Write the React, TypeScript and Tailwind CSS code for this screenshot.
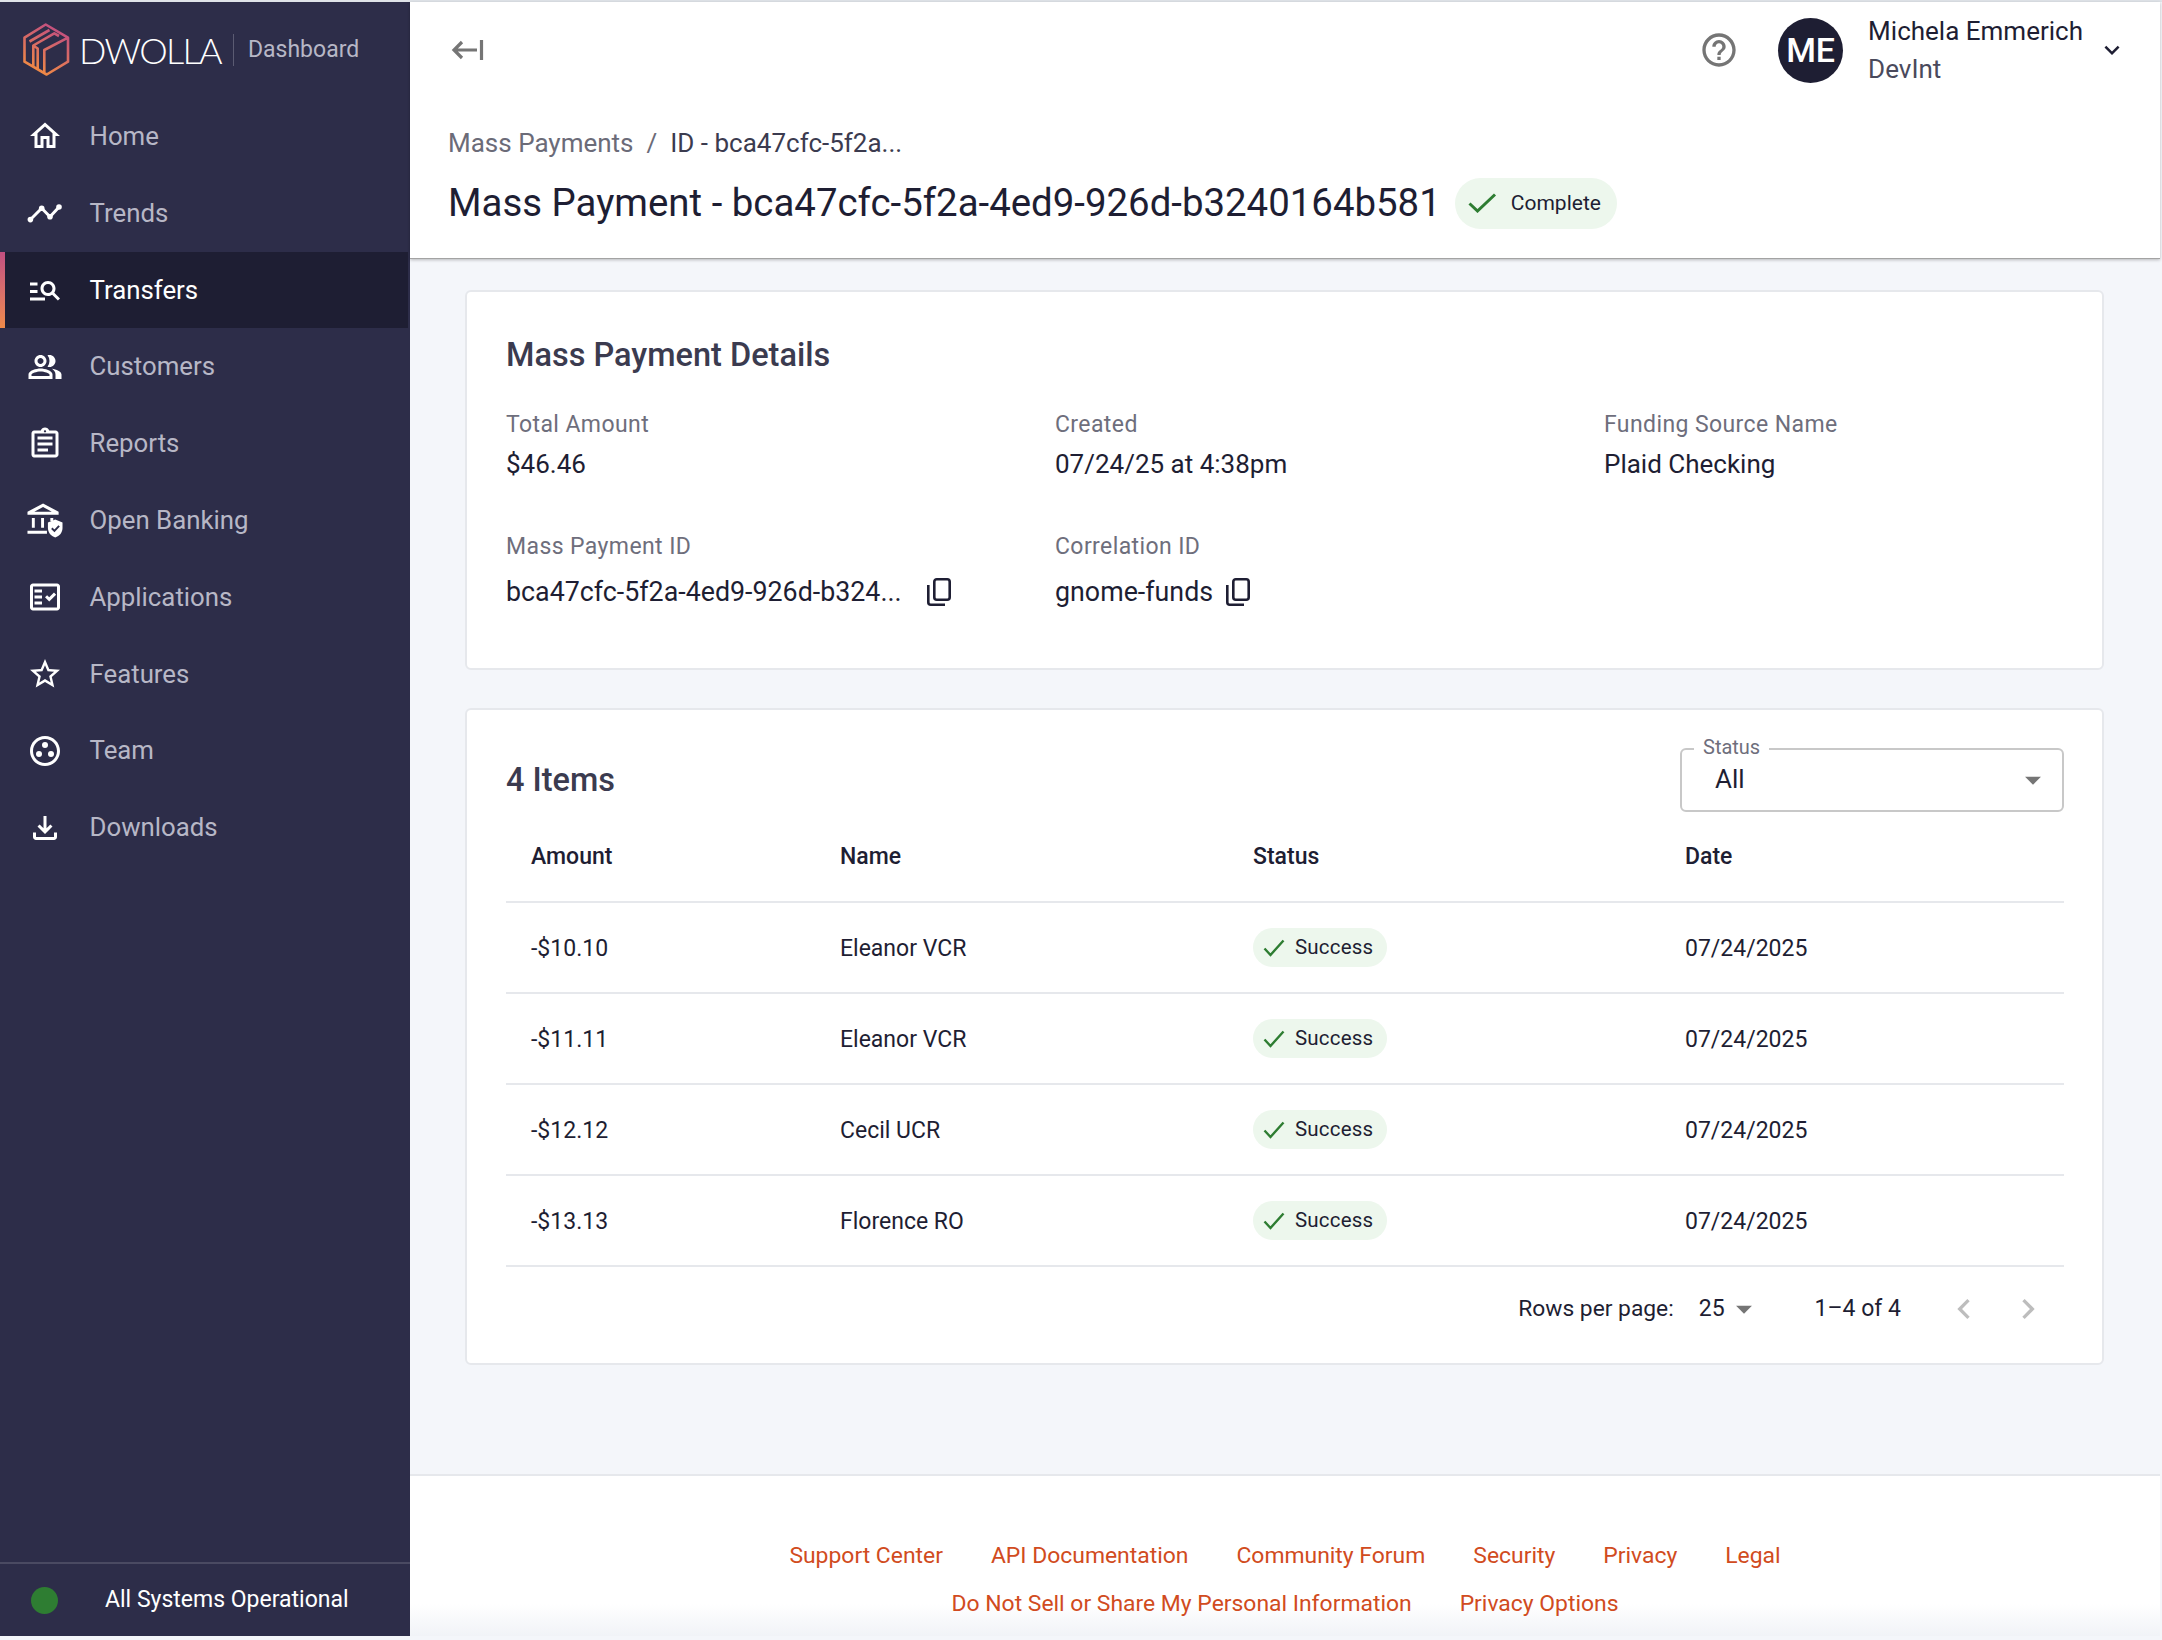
import {
  MdOutlineHome,
  MdManageSearch,
  MdOutlinePeopleAlt,
  MdOutlineAssignment,
  MdOutlineFactCheck,
  MdOutlineStarBorder,
  MdOutlineGroupWork,
  MdOutlineFileDownload,
  MdHelpOutline,
  MdKeyboardArrowDown,
  MdArrowDropDown,
  MdChevronLeft,
  MdChevronRight,
} from "react-icons/md";

const navIcon = { size: 38 };

function Logo() {
  return (
    <svg width="47" height="54" viewBox="8 8 47 54" fill="none" strokeWidth="2.6" strokeLinejoin="round">
      <defs>
        <linearGradient id="dw" gradientUnits="userSpaceOnUse" x1="42" y1="12" x2="20" y2="56">
          <stop offset="0" stopColor="#c24f80" />
          <stop offset="1" stopColor="#f08a45" />
        </linearGradient>
      </defs>
      <path
        d="M30.7 9.5 53 22.7V46.7L31.7 59.5 9.5 46.7V22.7ZM18.3 51.5V30.5L39.3 18.3 44 21M22.7 54V33.5L18.3 30.5M29.3 58V35L53 22.7M14.5 26.5 34.5 15"
        stroke="url(#dw)"
      />
    </svg>
  );
}

function TrendsIcon() {
  return (
    <svg width="36" height="36" viewBox="0 0 36 36" fill="none">
      <path d="M3 25 14.7 13.3 23 21.7 32.3 11.7" stroke="#fff" strokeWidth="3" strokeLinecap="round" strokeLinejoin="round" />
      <circle cx="3.4" cy="24.6" r="2.8" fill="#fff" />
      <circle cx="14.7" cy="13.3" r="2.8" fill="#fff" />
      <circle cx="23" cy="21.7" r="2.8" fill="#fff" />
      <circle cx="32" cy="12" r="2.8" fill="#fff" />
    </svg>
  );
}

function BankIcon() {
  return (
    <svg width="37" height="37" viewBox="0 0 37 37" fill="none">
      <path d="M16.5 1 32.5 9.5V12.5H.5V9.5Z M16.5 4.6 7.5 9.6H25.5Z" fill="#fff" fillRule="evenodd" />
      <path d="M5 16h3v10H5zM14.5 16h3v10h-3zM24 16h3v3h-3zM.5 29h20v3H.5z" fill="#fff" />
      <path d="M29 17.5 36.5 20.5V26C36.5 31 33.5 34.5 29 36 24.5 34.5 21.5 31 21.5 26V20.5Z" fill="#fff" />
      <path d="M25.5 26.5 28.2 29.2 33 24" stroke="#2d2d49" strokeWidth="2" />
    </svg>
  );
}

function CopyIcon({ className }: { className: string }) {
  return (
    <svg className={className} width="24" height="28" viewBox="0 0 24 28" fill="none" stroke="#1e1e33" strokeWidth="2.6">
      <rect x="7.3" y="1.3" width="15.4" height="20.4" rx="2.5" />
      <path d="M1.3 7v17.2a2.5 2.5 0 0 0 2.5 2.5H18" />
    </svg>
  );
}

function NavItem({ icon, label, active }: { icon: React.ReactNode; label: string; active?: boolean }) {
  return (
    <div
      className={
        active
          ? "relative flex h-[76.8px] w-[408px] items-center gap-[26.5px] bg-[#1e1e33] pl-[27px] text-white"
          : "relative flex h-[76.8px] items-center gap-[26.5px] pl-[27px] text-[#b7b7c6]"
      }
    >
      {active && <span className="absolute top-0 left-0 h-full w-[5px] bg-linear-to-b from-[#c24f80] to-[#ef8a48]" />}
      <span className="flex w-[36px] items-center justify-center text-white">{icon}</span>
      <span className="text-[25.8px]">{label}</span>
    </div>
  );
}

function Sidebar() {
  return (
    <aside className="flex w-[410px] shrink-0 flex-col bg-[#2d2d49]">
      <div className="flex h-[96px] items-center pl-[23px]">
        <Logo />
        <span className="ml-[9px] font-['Lato',sans-serif] text-[36px] font-light tracking-[-1.7px] text-white">DWOLLA</span>
        <span className="ml-[12px] h-[32px] w-[1px] bg-[#5b5b72]" />
        <span className="ml-[14px] text-[23px] text-[#b7b7c6]">Dashboard</span>
      </div>
      <nav className="flex flex-col">
        <NavItem icon={<MdOutlineHome {...navIcon} />} label="Home" />
        <NavItem icon={<TrendsIcon />} label="Trends" />
        <NavItem icon={<MdManageSearch {...navIcon} />} label="Transfers" active />
        <NavItem icon={<MdOutlinePeopleAlt {...navIcon} />} label="Customers" />
        <NavItem icon={<MdOutlineAssignment {...navIcon} />} label="Reports" />
        <NavItem icon={<BankIcon />} label="Open Banking" />
        <NavItem icon={<MdOutlineFactCheck {...navIcon} />} label="Applications" />
        <NavItem icon={<MdOutlineStarBorder {...navIcon} />} label="Features" />
        <NavItem icon={<MdOutlineGroupWork {...navIcon} />} label="Team" />
        <NavItem icon={<MdOutlineFileDownload {...navIcon} />} label="Downloads" />
      </nav>
      <div className="mt-auto flex h-[74px] items-center border-t-2 border-[#4a4a62] pl-[31px]">
        <span className="h-[27px] w-[27px] rounded-full bg-[#2e7d32]" />
        <span className="ml-[47px] text-[23px] text-white">All Systems Operational</span>
      </div>
    </aside>
  );
}

function SuccessChip() {
  return (
    <span className="inline-flex h-[39px] w-[134px] items-center rounded-full bg-[#edf7ed] pl-[10px] text-[20.5px] tracking-[0.2px] text-[#1e1e33]">
      <svg width="22" height="18" viewBox="0 0 22 18" fill="none">
        <path d="M1.5 9.5 7.5 16 20.5 1.5" stroke="#2e7d32" strokeWidth="2.4" />
      </svg>
      <span className="ml-[10px]">Success</span>
    </span>
  );
}

function Field({ label, children }: { label: string; children: React.ReactNode }) {
  return (
    <div>
      <div className="text-[23px] leading-[30px] tracking-[0.4px] text-[#6e6e7c]">{label}</div>
      {children}
    </div>
  );
}

const items = [
  ["-$10.10", "Eleanor VCR"],
  ["-$11.11", "Eleanor VCR"],
  ["-$12.12", "Cecil UCR"],
  ["-$13.13", "Florence RO"],
];

const tableCols = "grid grid-cols-[309px_413px_432px_1fr] items-center pl-[25px]";

function Details() {
  return (
    <section className="h-[380px] rounded-[6px] border-2 border-[#e6e8ec] bg-white pt-[43px] pl-[39px]">
      <h2 className="text-[32.5px] leading-[40px] font-medium text-[#3b3b4f]">Mass Payment Details</h2>
      <div className="mt-[35px] grid grid-cols-[549px_549px_1fr]">
        <Field label="Total Amount">
          <div className="mt-[7px] text-[26px] leading-[34px] text-[#1e1e33]">$46.46</div>
        </Field>
        <Field label="Created">
          <div className="mt-[7px] text-[26px] leading-[34px] text-[#1e1e33]">07/24/25 at 4:38pm</div>
        </Field>
        <Field label="Funding Source Name">
          <div className="mt-[7px] text-[26px] leading-[34px] text-[#1e1e33]">Plaid Checking</div>
        </Field>
      </div>
      <div className="mt-[51px] grid grid-cols-[549px_549px_1fr]">
        <Field label="Mass Payment ID">
          <div className="mt-[12px] flex items-center text-[26.8px] leading-[36px] text-[#1e1e33]">
            bca47cfc-5f2a-4ed9-926d-b324...
            <CopyIcon className="ml-[25px]" />
          </div>
        </Field>
        <Field label="Correlation ID">
          <div className="mt-[12px] flex items-center text-[26.8px] leading-[36px] text-[#1e1e33]">
            gnome-funds
            <CopyIcon className="ml-[13px]" />
          </div>
        </Field>
      </div>
    </section>
  );
}

function Items() {
  return (
    <section className="mt-[38px] h-[657px] rounded-[6px] border-2 border-[#e6e8ec] bg-white pt-[38px] pr-[38px] pl-[39px]">
      <div className="flex h-[63px] items-center justify-between">
        <h2 className="pt-[2px] text-[32.5px] font-medium text-[#3b3b4f]">4 Items</h2>
        <div className="relative flex h-[64px] w-[384px] items-center justify-between rounded-[6px] border-2 border-[#c8c8c8] pr-[10px] pl-[33px]">
          <span className="absolute top-[-16px] left-[12px] bg-white px-[9px] text-[20px] leading-[26px] text-[#6e6e7c]">Status</span>
          <span className="text-[26px] text-[#1e1e33]">All</span>
          <MdArrowDropDown size={38} className="text-[#757575]" />
        </div>
      </div>
      <div className={`${tableCols} h-[92px] border-b-2 border-[#e6e8ec] text-[23px] font-medium text-[#1e1e33]`}>
        <span className="mt-[2px]">Amount</span>
        <span className="mt-[2px]">Name</span>
        <span className="mt-[2px]">Status</span>
        <span className="mt-[2px]">Date</span>
      </div>
      {items.map(([amount, name]) => (
        <div key={amount} className={`${tableCols} h-[91px] border-b-2 border-[#e6e8ec] text-[23px] text-[#1e1e33]`}>
          <span className="mt-[3px]">{amount}</span>
          <span className="mt-[3px]">{name}</span>
          <span>
            <SuccessChip />
          </span>
          <span className="mt-[3px]">07/24/2025</span>
        </div>
      ))}
      <div className="flex h-[82px] items-center justify-end pt-[2px] pr-[16px] text-[23px] text-[#1e1e33]">
        <span className="text-[22.8px]">Rows per page:</span>
        <span className="ml-[25px]">25</span>
        <MdArrowDropDown size={38} className="text-[#757575]" />
        <span className="ml-[52px]">1–4 of 4</span>
        <MdChevronLeft size={40} className="ml-[43px] text-[#bdbdbd]" />
        <MdChevronRight size={40} className="ml-[24px] text-[#bdbdbd]" />
      </div>
    </section>
  );
}

export default function App() {
  return (
    <div className="h-[1640px] w-[2162px] overflow-hidden bg-[#f4f6fa] font-['Roboto',sans-serif]">
      <div className="h-[2px] bg-[#dfe3e8]" />
      <div className="flex h-[1634px] w-[2160px]">
        <Sidebar />
        <main className="flex min-w-0 flex-1 flex-col">
          <header className="h-[257px] shrink-0 border-b border-[#a3a3a3] bg-white pl-[38px] shadow-[0_1px_3px_rgba(0,0,0,0.25)]">
            <div className="flex h-[96px] items-center pr-[33px]">
              <svg width="36" height="24" viewBox="0 0 36 24" fill="none" stroke="#757575" strokeWidth="3.2">
                <path d="M14 4 6 12l8 8M6 12h23M33.5 2v20" />
              </svg>
              <MdHelpOutline size={40} className="ml-auto text-[#757575]" />
              <span className="ml-[39px] flex h-[65px] w-[65px] items-center justify-center rounded-full bg-[#1e1e33] text-[34px] font-medium text-white">
                ME
              </span>
              <div className="ml-[25px] text-[#1e1e33]">
                <div className="text-[26px] leading-[38px]">Michela Emmerich</div>
                <div className="text-[26px] leading-[38px] text-[#4a4a5c]">DevInt</div>
              </div>
              <MdKeyboardArrowDown size={30} className="ml-[14px] text-[#1e1e33]" />
            </div>
            <div className="mt-[28px] flex text-[26px] leading-[34px]">
              <span className="text-[#6b6b78]">Mass Payments</span>
              <span className="mx-[13px] text-[#6b6b78]">/</span>
              <span className="text-[#3b3b4f]">ID - bca47cfc-5f2a...</span>
            </div>
            <div className="mt-[17px] flex items-center">
              <h1 className="text-[38.4px] leading-[52px] text-[#1e1e33]">Mass Payment - bca47cfc-5f2a-4ed9-926d-b3240164b581</h1>
              <span className="ml-[14px] inline-flex h-[51px] w-[162px] items-center rounded-full bg-[#edf7ed] pl-[13px] text-[21px] text-[#1e1e33]">
                <svg width="29" height="20" viewBox="0 0 29 20" fill="none">
                  <path d="M1.5 10.5 9.5 18 27 1.5" stroke="#2e7d32" strokeWidth="3" />
                </svg>
                <span className="mt-[2px] ml-[14px]">Complete</span>
              </span>
            </div>
          </header>
          <div className="flex-1 pt-[31px] pr-[56px] pl-[55px]">
            <Details />
            <Items />
          </div>
          <footer className="h-[162px] shrink-0 border-t-2 border-[#e6e8ec] bg-linear-to-b from-white from-80% to-[#f1f3f7] pt-[56px] text-[22.9px] leading-[48px] text-[#d14b20]">
            <div className="flex justify-center gap-[48px]">
              <span>Support Center</span>
              <span>API Documentation</span>
              <span>Community Forum</span>
              <span>Security</span>
              <span>Privacy</span>
              <span>Legal</span>
            </div>
            <div className="flex justify-center gap-[48px]">
              <span>Do Not Sell or Share My Personal Information</span>
              <span>Privacy Options</span>
            </div>
          </footer>
        </main>
      </div>
    </div>
  );
}
